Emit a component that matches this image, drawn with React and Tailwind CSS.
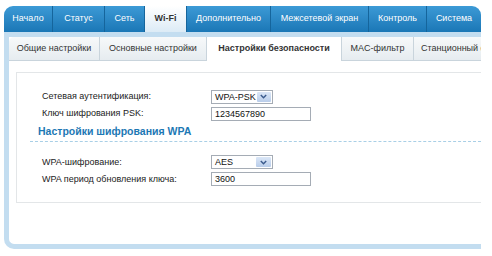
import React from 'react';

const mainTabs = [
  { label: 'Начало', w: 'w-[48px]' },
  { label: 'Статус', w: 'w-[52px]' },
  { label: 'Сеть', w: 'w-[40px]' },
  { label: 'Wi-Fi', w: 'w-[42px]', active: true },
  { label: 'Дополнительно', w: 'w-[84px]' },
  { label: 'Межсетевой экран', w: 'w-[98px]' },
  { label: 'Контроль', w: 'w-[58px]' },
  { label: 'Система', w: 'flex-1' },
];

const subTabs = [
  { label: 'Общие настройки', w: 'w-[90px]' },
  { label: 'Основные настройки', w: 'w-[107px]' },
  { label: 'Настройки безопасности', w: 'w-[135px]', active: true },
  { label: 'MAC-фильтр', w: 'w-[72px]' },
];

function Select({ value }) {
  return (
    <div className="flex h-[14px] w-[62px] items-stretch border border-[#a5acb5] bg-white">
      <span className="flex-1 whitespace-nowrap pl-[3px] text-[9px] leading-[12px] text-[#111]">{value}</span>
      <span className="m-[1px] flex w-[15px] items-center justify-center rounded-[1px] bg-gradient-to-b from-[#dbe7f7] to-[#b9cdea]">
        <svg width="7" height="5" viewBox="0 0 7 5">
          <path d="M0.8 1 L3.5 3.8 L6.2 1" fill="none" stroke="#3a5a8c" strokeWidth="1.4" />
        </svg>
      </span>
    </div>
  );
}

function Input({ value }) {
  return (
    <div className="h-[14px] w-[100px] border border-[#a5acb5] bg-white pl-[3px] text-[9px] leading-[12px] text-[#111]">
      {value}
    </div>
  );
}

function Row({ label, children }) {
  return (
    <div className="flex h-[17px] items-center">
      <span className="w-[169px] text-[9px] text-[#222]">{label}</span>
      {children}
    </div>
  );
}

export default function App() {
  return (
    <div
      className="h-[256px] w-[492px] overflow-hidden bg-white pl-[4px] pt-[6px]"
      style={{ fontFamily: '"Liberation Sans", Arial, sans-serif' }}
    >
      <div className="w-[477px]">
        <div className="flex h-[26px] overflow-hidden rounded-t-[9px] bg-gradient-to-b from-[#3c9ad6] to-[#1a77b6]">
          {mainTabs.map((t, i) => (
            <div
              key={t.label}
              className={`${t.w} flex items-center justify-center text-[9px] ${
                i > 0 ? 'border-l border-[#15659c]' : ''
              } ${
                t.active
                  ? 'bg-gradient-to-b from-white to-[#dcebf6] font-bold text-[#333]'
                  : 'text-white'
              }`}
            >
              {t.label}
            </div>
          ))}
        </div>

        <div className="rounded-bl-[10px] border-b-[5px] border-l-[5px] border-t-[5px] border-[#c3ddf0] bg-white">
          <div className="flex h-[24px] rounded-tl-[5px] border-b border-[#c9d4dc] bg-gradient-to-b from-[#f7f9fa] to-[#e6ecf0]">
            {subTabs.map((t, i) => (
              <div
                key={t.label}
                className={`${t.w} flex items-center justify-center whitespace-nowrap text-[9px] text-[#333] ${
                  i > 0 ? 'border-l border-[#c9d4dc]' : ''
                } ${t.active ? '-mb-px bg-white font-bold' : ''}`}
              >
                {t.label}
              </div>
            ))}
            <div className="flex flex-1 items-center overflow-hidden whitespace-nowrap border-l border-[#c9d4dc] pl-[7px] text-[9px] text-[#333]">
              Станционный фильтр
            </div>
          </div>

          <div className="pb-[41px] pl-[7px] pt-[11px]">
            <div className="border border-r-0 border-[#e3e6e8] pb-[14px] pt-[15px]">
              <div className="pl-[25px]">
                <Row label="Сетевая аутентификация:">
                  <Select value="WPA-PSK" />
                </Row>
                <Row label="Ключ шифрования PSK:">
                  <Input value="1234567890" />
                </Row>
              </div>
              <div className="ml-[13px] mt-[2px] border-b border-dashed border-[#a9cfe6] pb-[1px] pl-[8px] text-[10.5px] font-bold text-[#1d78b4]">
                Настройки шифрования WPA
              </div>
              <div className="pl-[25px] pt-[12px]">
                <Row label="WPA-шифрование:">
                  <Select value="AES" />
                </Row>
                <Row label="WPA период обновления ключа:">
                  <Input value="3600" />
                </Row>
              </div>
            </div>
          </div>
        </div>
      </div>
    </div>
  );
}
